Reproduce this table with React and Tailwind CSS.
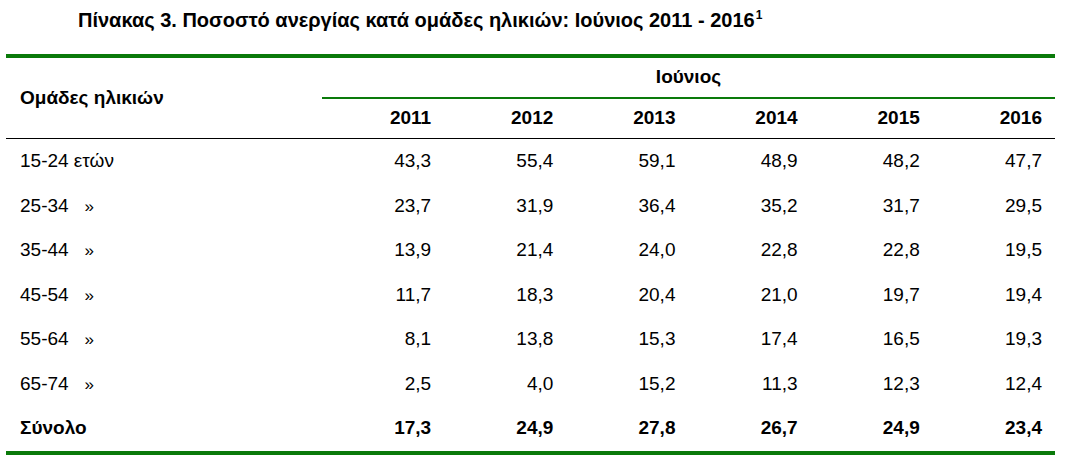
import React from 'react';

const rows = [
    { label: '15-24 ετών', values: ['43,3', '55,4', '59,1', '48,9', '48,2', '47,7'] },
    { label: '25-34', values: ['23,7', '31,9', '36,4', '35,2', '31,7', '29,5'] },
    { label: '35-44', values: ['13,9', '21,4', '24,0', '22,8', '22,8', '19,5'] },
    { label: '45-54', values: ['11,7', '18,3', '20,4', '21,0', '19,7', '19,4'] },
    { label: '55-64', values: ['8,1', '13,8', '15,3', '17,4', '16,5', '19,3'] },
    { label: '65-74', values: ['2,5', '4,0', '15,2', '11,3', '12,3', '12,4'] },
];

const total = ['17,3', '24,9', '27,8', '26,7', '24,9', '23,4'];
const years = ['2011', '2012', '2013', '2014', '2015', '2016'];

const App = () => {
    return (
        <div className="w-[1067px] h-[473px] bg-white text-black" style={{ fontFamily: '"Liberation Sans", Arial, sans-serif' }}>
            <h1 className="pl-[78px] pt-[9px] h-[54px] text-[20px] font-bold leading-[22px]">
                Πίνακας 3. Ποσοστό ανεργίας κατά ομάδες ηλικιών: Ιούνιος 2011 - 2016<sup className="text-[12px] relative -top-[8px] ml-[1px]">1</sup>
            </h1>
            <div className="ml-[6px] w-[1049px] h-[4px] bg-[#0a7a0a]" />
            <table className="ml-[6px] w-[1049px] table-fixed border-separate border-spacing-0 text-[19px]">
                <colgroup>
                    <col className="w-[316px]" />
                    {years.map((y) => <col key={y} />)}
                </colgroup>
                <thead>
                    <tr className="h-[41px]">
                        <th rowSpan={2} className="text-left font-bold pl-[14px] align-middle border-b border-black">Ομάδες ηλικιών</th>
                        <th colSpan={6} className="font-bold text-center border-b-2 border-[#0a7a0a]">Ιούνιος</th>
                    </tr>
                    <tr className="h-[40px]">
                        {years.map((y) => (
                            <th key={y} className="text-right font-bold pr-[13px] border-b border-black">{y}</th>
                        ))}
                    </tr>
                </thead>
                <tbody>
                    {rows.map((row) => (
                        <tr key={row.label} className="h-[44.57px]">
                            <td className="pl-[14px]">
                                {row.label}
                                {row.label.length === 5 && <span className="ml-[16px] text-[17px]">»</span>}
                            </td>
                            {row.values.map((v, i) => (
                                <td key={i} className="text-right pr-[13px]">{v}</td>
                            ))}
                        </tr>
                    ))}
                    <tr className="h-[44.57px] font-bold">
                        <td className="pl-[14px]">Σύνολο</td>
                        {total.map((v, i) => (
                            <td key={i} className="text-right pr-[13px]">{v}</td>
                        ))}
                    </tr>
                </tbody>
            </table>
            <div className="ml-[6px] w-[1049px] h-[4px] bg-[#0a7a0a]" />
        </div>
    );
};

export default App;
